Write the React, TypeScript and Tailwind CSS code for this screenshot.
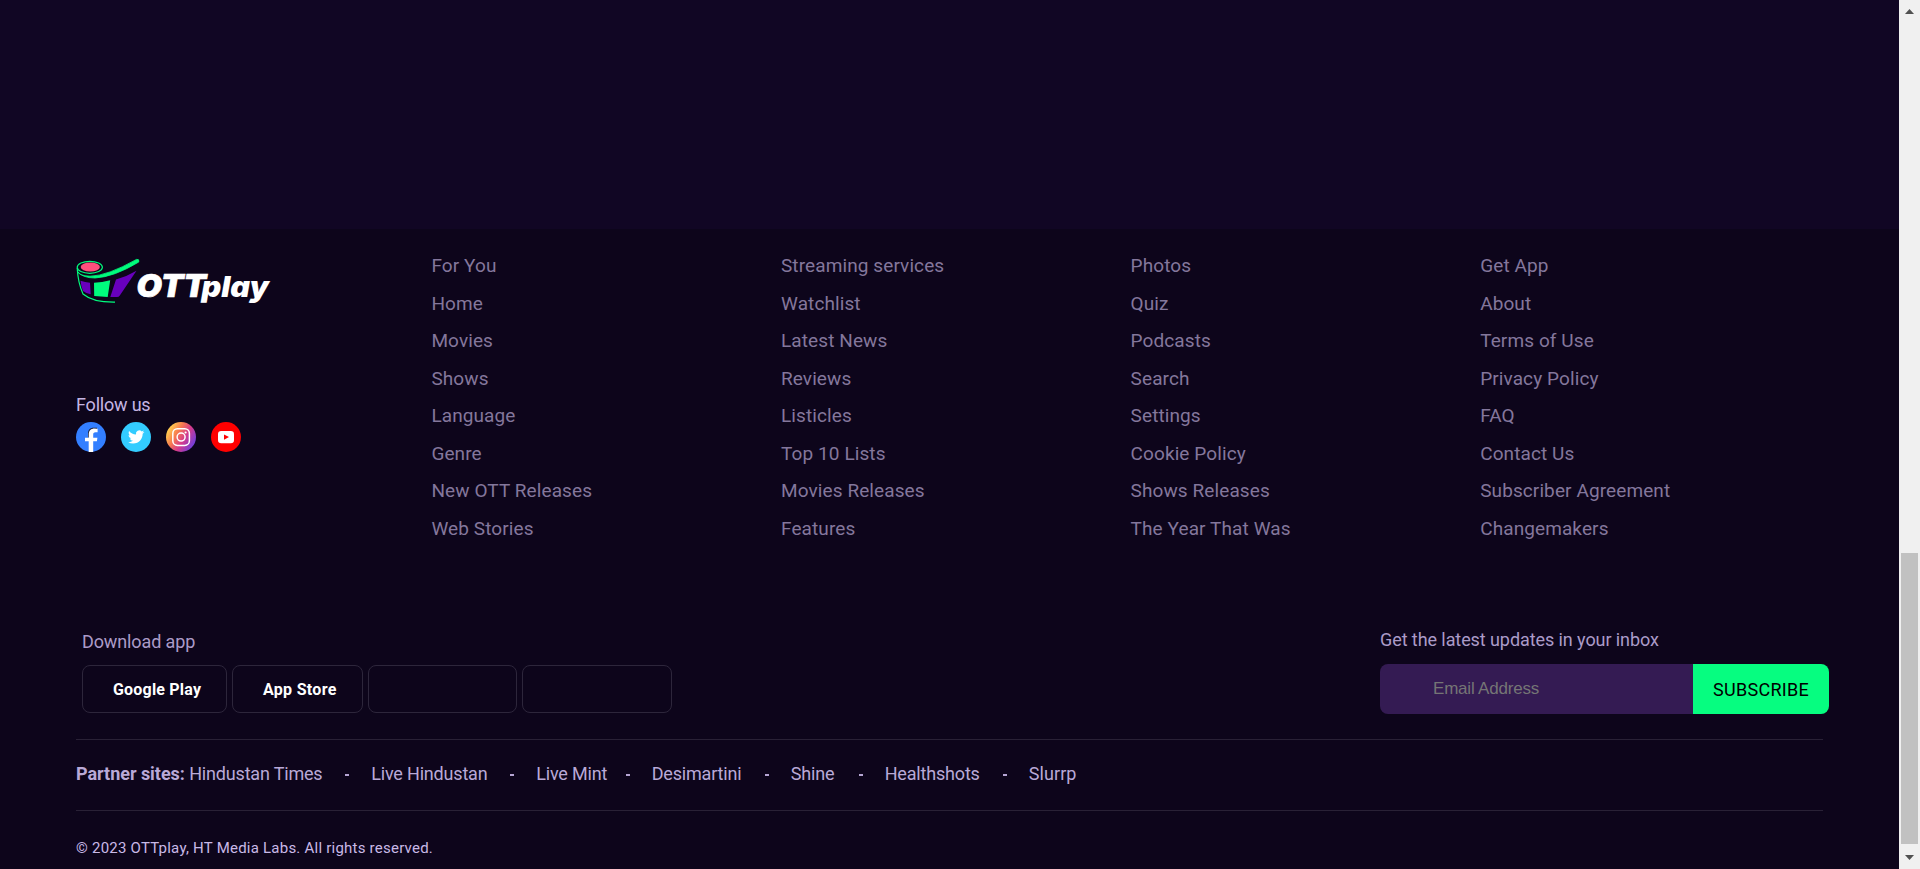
import React from "react";

const columns: string[][] = [
  ["For You", "Home", "Movies", "Shows", "Language", "Genre", "New OTT Releases", "Web Stories"],
  ["Streaming services", "Watchlist", "Latest News", "Reviews", "Listicles", "Top 10 Lists", "Movies Releases", "Features"],
  ["Photos", "Quiz", "Podcasts", "Search", "Settings", "Cookie Policy", "Shows Releases", "The Year That Was"],
  ["Get App", "About", "Terms of Use", "Privacy Policy", "FAQ", "Contact Us", "Subscriber Agreement", "Changemakers"],
];

function Logo() {
  return (
    <svg width="196" height="50" viewBox="0 0 196 50" className="block shrink-0" role="img" aria-label="OTTplay">
      <path d="M4.500 24.800Q9 26.500 14 26.700L14.700 38.200Q10 37.500 7 35Q5 30 4.500 24.800Z" fill="#6800bd" />
      <path d="M18 26.800Q26 26.500 34.200 24.300L31.700 41L18.200 40Z" fill="#00fc7d" />
      <path d="M40 23.500Q51 20.500 60.500 14.800L43.800 39.500Q42.800 41 41 41L34.300 41Z" fill="#6800bd" />
      <path d="M1.200 12Q2 27 7 38Q17 46.500 39 46.200" fill="none" stroke="#00fc7d" strokeWidth="1.200" />
      <path d="M1.200 15Q2.500 19.800 14 20.200Q31 20 60.500 3.400Q63.500 2.800 62.800 6Q38 21 19 22Q6 22 1.200 15Z" fill="#00fc7d" stroke="#00fc7d" strokeWidth=".8" />
      <ellipse cx="13.800" cy="11.300" rx="12.600" ry="6" fill="#0d051b" stroke="#00fc7d" strokeWidth="1.200" />
      <ellipse cx="14.300" cy="11" rx="9.600" ry="4.500" fill="#ff4f7d" />
      <text x="60.500" y="41" fontFamily="Inter" fontWeight="900" fontStyle="italic" fontSize="31.500" fill="#fff" stroke="#fff" strokeWidth=".7" textLength="69.500" lengthAdjust="spacingAndGlyphs">OTT</text>
      <text x="125.500" y="41" fontFamily="Inter" fontWeight="900" fontStyle="italic" fontSize="28.500" fill="#fff" textLength="67.500" lengthAdjust="spacingAndGlyphs">play</text>
    </svg>
  );
}

function Socials() {
  return (
    <div className="flex gap-[15px]">
      <svg width="30" height="30" viewBox="0 0 30 30">
        <circle cx="15" cy="15" r="15" fill="#337fff" />
        <path d="M12 15.500V11.700C12 7.700 14.300 5.700 17.800 5.700H21V9H19L14 15.500Z" fill="#171a2e" />
        <path d="M12.700 30V19.300H9V15.800H12.700V12.500C12.700 8.500 15 6.500 18.500 6.500Q20.200 6.500 21.600 6.800V10.200H19.600C17.700 10.200 17.200 11.300 17.200 12.600V15.800H21.400L20.900 19.300H17.200V30Z" fill="#fff" />
      </svg>
      <svg width="30" height="30" viewBox="0 0 30 30">
        <circle cx="15" cy="15" r="15" fill="#33ccff" />
        <g transform="translate(7 6.800) scale(.68)">
          <path d="M23.953 4.570a10 10 0 01-2.825.775 4.958 4.958 0 002.163-2.723c-.951.555-2.005.959-3.127 1.184a4.920 4.920 0 00-8.384 4.482C7.690 8.095 4.067 6.130 1.640 3.162a4.822 4.822 0 00-.666 2.475c0 1.710.870 3.213 2.188 4.096a4.904 4.904 0 01-2.228-.616v.060a4.923 4.923 0 003.946 4.827 4.996 4.996 0 01-2.212.085 4.936 4.936 0 004.604 3.417 9.867 9.867 0 01-6.102 2.105c-.390 0-.779-.023-1.170-.067a13.995 13.995 0 007.557 2.209c9.053 0 13.998-7.496 13.998-13.985 0-.210 0-.420-.015-.630A9.935 9.935 0 0024 4.590z" fill="#fff" />
        </g>
      </svg>
      <svg width="30" height="30" viewBox="0 0 30 30">
        <defs>
          <linearGradient id="insta" x1="0" y1="0.200" x2="1" y2="0.800">
            <stop offset="0.100" stopColor="#ffc84f" />
            <stop offset="0.350" stopColor="#f77a50" />
            <stop offset="0.600" stopColor="#d53a8c" />
            <stop offset="0.950" stopColor="#6b3fe0" />
          </linearGradient>
        </defs>
        <circle cx="15" cy="15" r="15" fill="url(#insta)" />
        <rect x="6.800" y="6.800" width="16.600" height="16.600" rx="4.600" fill="none" stroke="#fff" strokeWidth="1.500" />
        <circle cx="15.100" cy="15.100" r="4" fill="none" stroke="#fff" strokeWidth="1.500" />
        <circle cx="19.600" cy="10.500" r="1.100" fill="#fff" />
      </svg>
      <svg width="30" height="30" viewBox="0 0 30 30">
        <circle cx="15" cy="15" r="15" fill="#ff0000" />
        <rect x="7" y="9" width="16" height="12.200" rx="3.200" fill="#fff" />
        <path d="M13 12.400L18 15.100L13 17.800Z" fill="#ff0000" />
      </svg>
    </div>
  );
}

const partners = [
  { name: "Hindustan Times", box: "w-[182px]" },
  { name: "Live Hindustan", box: "w-[165px]" },
  { name: "Live Mint", box: "w-[115.500px]" },
  { name: "Desimartini", box: "w-[139px]" },
  { name: "Shine", box: "w-[94px]" },
  { name: "Healthshots", box: "w-[144px]" },
];

function Scrollbar() {
  return (
    <div className="flex w-[21px] shrink-0 flex-col items-center bg-[#f0f0f0]">
      <svg width="21" height="20" viewBox="0 0 21 20"><path d="M6 14L10.500 9L15 14Z" fill="#505050" /></svg>
      <div className="mt-[533px] h-[291px] w-[17px] bg-[#c1c1c1]" />
      <svg width="21" height="25" viewBox="0 0 21 25"><path d="M6 11L10.500 16L15 11Z" fill="#505050" /></svg>
    </div>
  );
}

export default function App() {
  return (
    <div className="flex h-[869px] w-[1920px] overflow-hidden bg-[#0d051b] font-['Roboto','Liberation_Sans',sans-serif]">
      <div className="flex min-w-0 flex-1 flex-col">
        <div className="h-[229px] shrink-0 bg-[#110624]" />
        <footer className="flex flex-col pl-[76px]">
          <div className="flex h-[401px]">
            <div className="w-[355.400px] shrink-0 pt-[27px]">
              <Logo />
              <p className="mt-[86px] mb-[4px] text-[18px] leading-[26px] tracking-[-0.2px] text-[#c5b5e3]">Follow us</p>
              <Socials />
            </div>
            {columns.map((links) => (
              <ul key={links[0]} className="w-[349.6px] shrink-0 pt-[18px]">
                {links.map((l) => (
                  <li key={l} className="h-[37.5px] text-[19px] leading-[37.5px] tracking-[0.1px] whitespace-nowrap text-[#84779c]">{l}</li>
                ))}
              </ul>
            ))}
          </div>
          <div className="flex h-[109px] w-[1753px] justify-between pl-[6px]">
            <div>
              <p className="mb-[10px] h-[25px] text-[18px] leading-[24px] tracking-[-0.12px] text-[#ab9bc8]">Download app</p>
              <div className="flex gap-[5px] text-base font-bold tracking-[0.2px] text-white">
                <div className="h-12 w-[145px] rounded-lg border border-[#2d263b] pl-[30px] leading-[47px]">Google Play</div>
                <div className="h-12 w-[131px] rounded-lg border border-[#2d263b] pl-[30px] leading-[47px] tracking-[0.3px]">App Store</div>
                <div className="h-12 w-[149px] rounded-lg border border-[#2d263b]" />
                <div className="h-12 w-[150px] rounded-lg border border-[#2d263b]" />
              </div>
            </div>
            <div className="w-[449px]">
              <p className="mb-[9px] h-[25px] text-[18px] leading-[20px] tracking-[-0.08px] text-[#ab9bc8]">Get the latest updates in your inbox</p>
              <div className="flex h-[50px] overflow-hidden rounded-lg">
                <div className="w-[313px] bg-[#341b53] pl-[53px] font-['Liberation_Sans'] text-[17px] leading-[50px] tracking-[-0.2px] text-[#757575]">Email Address</div>
                <div className="flex-1 bg-[#06fd80] text-center text-[18px] leading-[52px] tracking-[0.3px] text-black">SUBSCRIBE</div>
              </div>
            </div>
          </div>
          <div className="flex h-[72px] w-[1747px] items-center border-y border-[#292136] pb-[3px] text-[18px] tracking-[-0.18px] whitespace-nowrap text-[#b9a9d7]">
            <span className="w-[113.200px] font-bold tracking-[-0.03px]">Partner sites:</span>
            {partners.map((p) => (
              <span key={p.name} className={`flex items-center justify-between pr-[22px] ${p.box}`}>
                {p.name}
                <span className="mt-[2px] h-[2px] w-[4px] bg-[#b5a5d3]" />
              </span>
            ))}
            <span className="tracking-[0.1px]">Slurrp</span>
          </div>
          <p className="mt-[26px] text-[15px] leading-[22px] tracking-[0.23px] text-[#c9b9e7]">© 2023 OTTplay, HT Media Labs. All rights reserved.</p>
        </footer>
      </div>
      <Scrollbar />
    </div>
  );
}
